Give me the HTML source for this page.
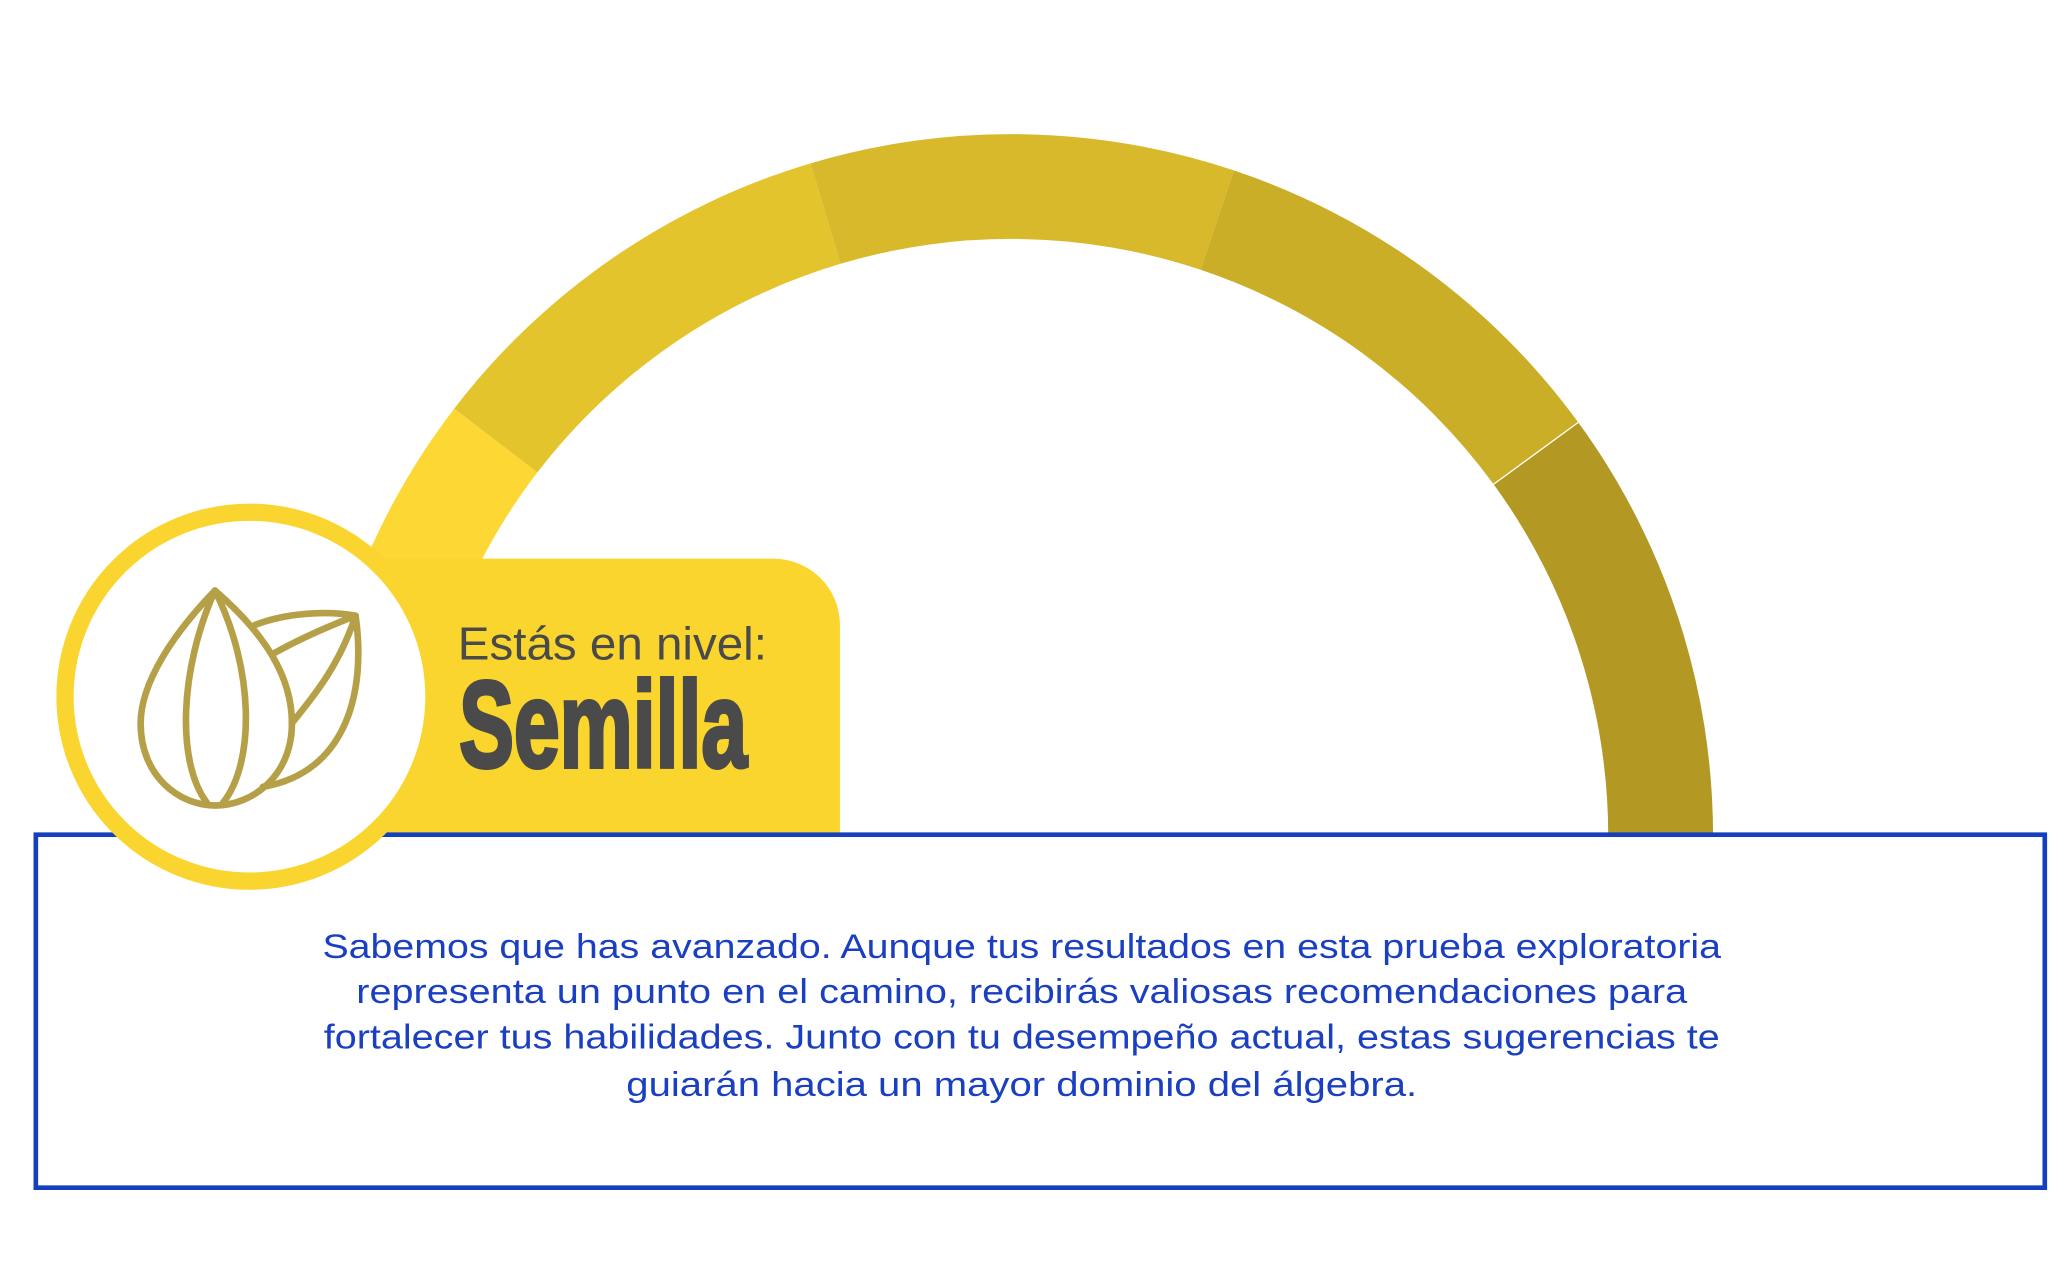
<!DOCTYPE html>
<html><head><meta charset="utf-8"><style>
html,body{margin:0;padding:0;background:#fff;}
svg{display:block}
</style></head><body>
<svg width="2070" height="1262" viewBox="0 0 1560 951" preserveAspectRatio="none" xmlns="http://www.w3.org/2000/svg">
<rect width="1560" height="951" fill="#fff"/>
<path d="M233,630 A529,529 0 0 1 342.3,307.9 L405,356 A450,450 0 0 0 312,630 Z" fill="#FDD835"/>
<path d="M342.3,307.9 A529,529 0 0 1 610.9,123.1 L633.4,198.8 A450,450 0 0 0 405,356 Z" fill="#E3C42C"/>
<path d="M610.9,123.1 A529,529 0 0 1 929.9,128.4 L904.8,203.3 A450,450 0 0 0 633.4,198.8 Z" fill="#D8B92B"/>
<path d="M929.9,128.4 A529,529 0 0 1 1189.4,318.3 L1125.6,364.9 A450,450 0 0 0 904.8,203.3 Z" fill="#CAAE28"/>
<path d="M1189.4,318.3 A529,529 0 0 1 1291,630 L1212,630 A450,450 0 0 0 1125.6,364.9 Z" fill="#B39824"/>
<line x1="1189.4" y1="318.3" x2="1125.6" y2="364.9" stroke="#fff" stroke-width="1"/>
<path d="M290,421 H583 A50,50 0 0 1 633,471 V630 H290 Z" fill="#F9D52E"/>
<rect x="27" y="629" width="1514" height="266" fill="#fff" stroke="#1440C0" stroke-width="3.5"/>
<circle cx="188" cy="525" r="139" fill="#fff" stroke="#FAD530" stroke-width="13"/>
<g fill="none" stroke="#B5A048" stroke-width="5" stroke-linejoin="round" stroke-linecap="round">
<path d="M162,445 C130,478 106,515 106,545 C106,585 135,607 162,607 C190,607 220,585 220,545 C220,510 200,478 162,445 Z"/>
<path d="M162,445 C135,505 133,575 156,605 M162,445 C192,505 192,575 168,605"/>
<path d="M192,471 C215,462 245,460 268,464 C276,520 262,582 198,593"/>
<path d="M268,464 Q232,478 207,492"/>
<path d="M268,464 C256,500 240,520 220,545"/>
</g>
<text x="345" y="497" font-family="Liberation Sans, sans-serif" font-size="35" fill="#4a4a4a" textLength="233" lengthAdjust="spacingAndGlyphs">Estás en nivel:</text>
<text x="346" y="578" font-family="Liberation Sans, sans-serif" font-weight="bold" font-size="92" fill="#4a4a4a" stroke="#4a4a4a" stroke-width="3" textLength="217" lengthAdjust="spacingAndGlyphs">Semilla</text>
<g font-family="Liberation Sans, sans-serif" font-size="26" fill="#1a3fc0" text-anchor="middle">
<text x="770" y="722" textLength="1054" lengthAdjust="spacingAndGlyphs">Sabemos que has avanzado. Aunque tus resultados en esta prueba exploratoria</text>
<text x="770" y="756" textLength="1003" lengthAdjust="spacingAndGlyphs">representa un punto en el camino, recibirás valiosas recomendaciones para</text>
<text x="770" y="790" textLength="1052" lengthAdjust="spacingAndGlyphs">fortalecer tus habilidades. Junto con tu desempeño actual, estas sugerencias te</text>
<text x="770" y="826" textLength="596" lengthAdjust="spacingAndGlyphs">guiarán hacia un mayor dominio del álgebra.</text>
</g>
</svg>
</body></html>
